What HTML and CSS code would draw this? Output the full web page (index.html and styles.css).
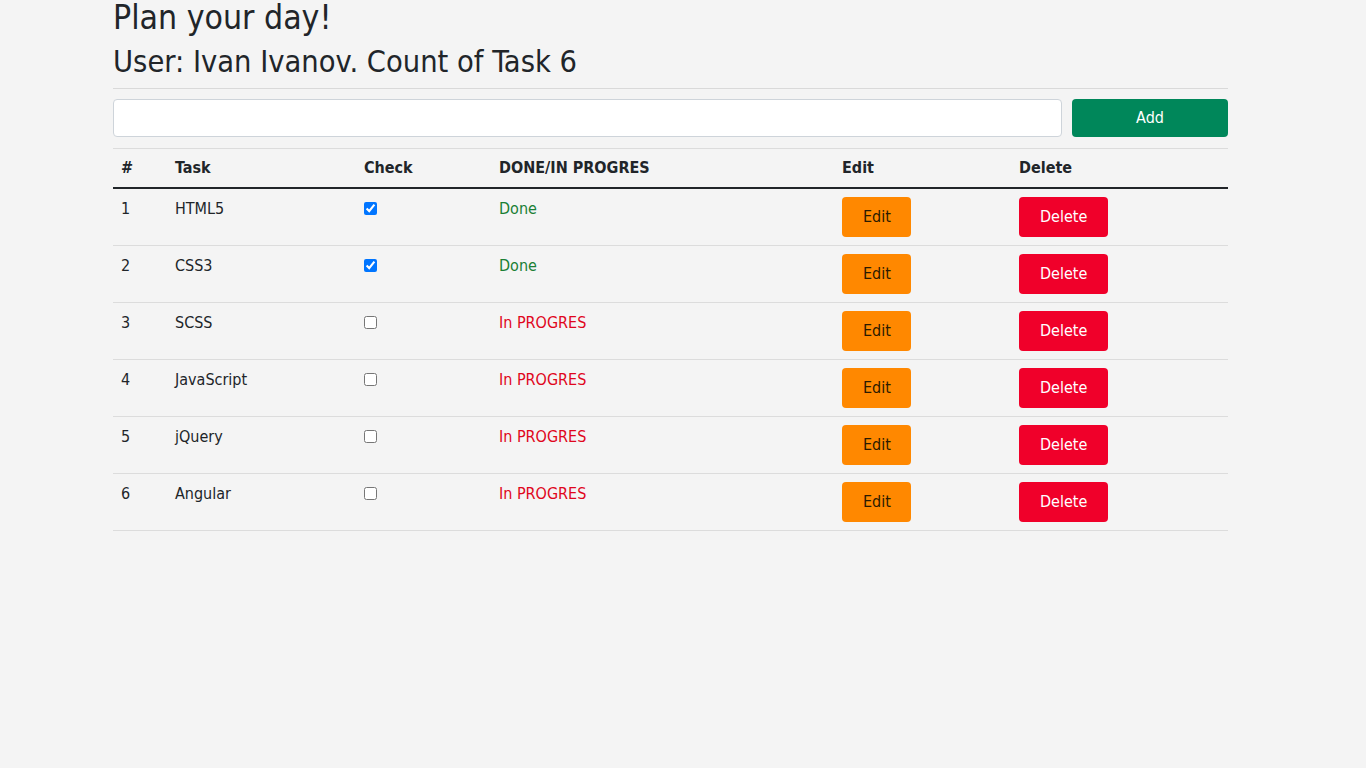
FILE: index.html
```html
<!DOCTYPE html>
<html lang="en">
<head>
<meta charset="utf-8">
<title>Plan your day!</title>
<link rel="stylesheet" href="styles.css">
</head>
<body>
<div class="container">
  <h1 class="title">Plan your day!</h1>
  <h2 class="subtitle">User: Ivan Ivanov. Count of Task 6</h2>
  <hr class="divider">
  <form class="add-form">
    <input class="task-input" type="text">
    <button class="btn btn-add" type="button">Add</button>
  </form>
  <table class="tasks">
    <thead>
      <tr>
        <th class="c-num">#</th>
        <th class="c-task">Task</th>
        <th class="c-check">Check</th>
        <th class="c-status">DONE/IN PROGRES</th>
        <th class="c-edit">Edit</th>
        <th class="c-del">Delete</th>
      </tr>
    </thead>
    <tbody>
      <tr>
        <td>1</td><td>HTML5</td><td><input type="checkbox" class="chk" checked></td>
        <td class="done">Done</td>
        <td><button class="btn btn-edit" type="button">Edit</button></td>
        <td><button class="btn btn-del" type="button">Delete</button></td>
      </tr>
      <tr>
        <td>2</td><td>CSS3</td><td><input type="checkbox" class="chk" checked></td>
        <td class="done">Done</td>
        <td><button class="btn btn-edit" type="button">Edit</button></td>
        <td><button class="btn btn-del" type="button">Delete</button></td>
      </tr>
      <tr>
        <td>3</td><td>SCSS</td><td><input type="checkbox" class="chk"></td>
        <td class="progress">In PROGRES</td>
        <td><button class="btn btn-edit" type="button">Edit</button></td>
        <td><button class="btn btn-del" type="button">Delete</button></td>
      </tr>
      <tr>
        <td>4</td><td>JavaScript</td><td><input type="checkbox" class="chk"></td>
        <td class="progress">In PROGRES</td>
        <td><button class="btn btn-edit" type="button">Edit</button></td>
        <td><button class="btn btn-del" type="button">Delete</button></td>
      </tr>
      <tr>
        <td>5</td><td>jQuery</td><td><input type="checkbox" class="chk"></td>
        <td class="progress">In PROGRES</td>
        <td><button class="btn btn-edit" type="button">Edit</button></td>
        <td><button class="btn btn-del" type="button">Delete</button></td>
      </tr>
      <tr>
        <td>6</td><td>Angular</td><td><input type="checkbox" class="chk"></td>
        <td class="progress">In PROGRES</td>
        <td><button class="btn btn-edit" type="button">Edit</button></td>
        <td><button class="btn btn-del" type="button">Delete</button></td>
      </tr>
    </tbody>
  </table>
</div>
</body>
</html>
```
FILE: styles.css
```css
* { box-sizing: border-box; }
html, body {
  margin: 0;
  padding: 0;
}
body {
  background: #f4f4f4;
  color: #212529;
  font-family: "DejaVu Sans Condensed", "DejaVu Sans", sans-serif;
  font-size: 16px;
  line-height: 24px;
}
.container {
  width: 1115px;
  margin-left: 113px;
}
.title {
  margin: 0;
  font-size: 33.5px;
  font-weight: 400;
  line-height: 35px;
}
.subtitle {
  margin: 8px 0 0;
  font-size: 30.5px;
  font-weight: 400;
  line-height: 37px;
}
.divider {
  margin: 8px 0 10px;
  border: 0;
  border-top: 1px solid #d9d9d9;
}
.add-form {
  display: flex;
  gap: 10px;
  margin-bottom: 11px;
}
.task-input {
  flex: 1;
  height: 38px;
  border: 1px solid #ced4da;
  border-radius: 4px;
  background: #fff;
  font: inherit;
  padding: 6px 12px;
}
.btn {
  font: inherit;
  border: 0;
  border-radius: 4px;
  cursor: pointer;
  padding: 8px 20px;
  line-height: 24px;
}
.btn-add {
  width: 156px;
  height: 38px;
  background: #00875a;
  color: #fff;
  padding: 6px 12px;
}
.btn-edit {
  background: #ff8800;
  color: #2a1a00;
  padding: 8px 20px 8px 21px;
}
.btn-del {
  background: #f0002a;
  color: #fff;
  padding: 8px 21px;
}
.tasks {
  width: 100%;
  border-collapse: collapse;
}
.tasks th, .tasks td {
  text-align: left;
  vertical-align: top;
  padding: 8px;
  border-top: 1px solid #dcdcdc;
}
.tasks th {
  font-weight: 700;
  padding: 7px 8px 7px;
  border-bottom: 2px solid #212529;
}
.tasks tbody tr:last-child td {
  border-bottom: 1px solid #dcdcdc;
}
.c-num { width: 54px; }
.c-task { width: 189px; }
.c-check { width: 135px; }
.c-status { width: 343px; }
.c-edit { width: 177px; }
.chk {
  margin: 5px 0 0;
  width: 13px;
  height: 13px;
}
.done { color: #1a7f35; }
.progress { color: #e0061c; }
```
